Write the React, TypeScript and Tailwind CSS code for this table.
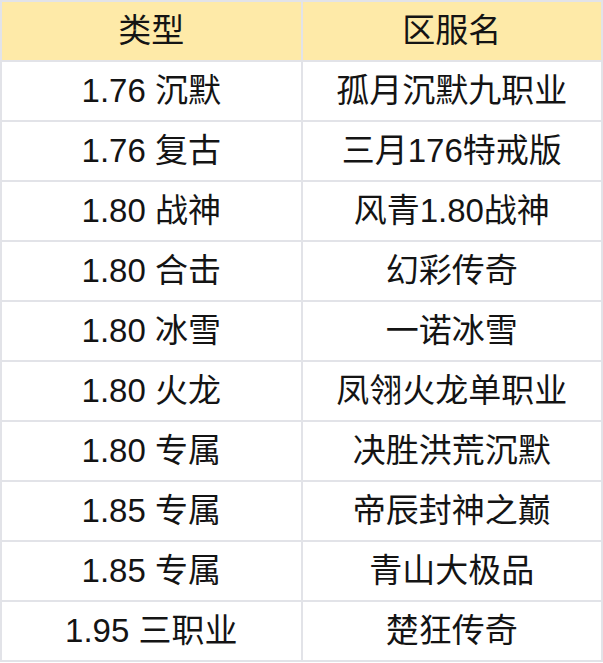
import React from "react";

const rows: [string, string][] = [
  ["1.76 沉默", "孤月沉默九职业"],
  ["1.76 复古", "三月176特戒版"],
  ["1.80 战神", "风青1.80战神"],
  ["1.80 合击", "幻彩传奇"],
  ["1.80 冰雪", "一诺冰雪"],
  ["1.80 火龙", "凤翎火龙单职业"],
  ["1.80 专属", "决胜洪荒沉默"],
  ["1.85 专属", "帝辰封神之巅"],
  ["1.85 专属", "青山大极品"],
  ["1.95 三职业", "楚狂传奇"],
];

export default function App() {
  return (
    <div
      className="w-[603px] bg-white"
      style={{ fontFamily: '"Liberation Sans", "Noto Sans CJK SC", sans-serif' }}
    >
      <div className="grid grid-cols-2 gap-[2px] bg-[#e2e3e8] p-[2px] text-[33px] text-[#141414]">
        <div className="h-[58px] bg-[#feeaa8] flex items-center justify-center">类型</div>
        <div className="h-[58px] bg-[#feeaa8] flex items-center justify-center">区服名</div>
        {rows.map(([a, b], i) => (
          <React.Fragment key={i}>
            <div className="h-[58px] bg-white flex items-center justify-center">{a}</div>
            <div className="h-[58px] bg-white flex items-center justify-center">{b}</div>
          </React.Fragment>
        ))}
      </div>
    </div>
  );
}
